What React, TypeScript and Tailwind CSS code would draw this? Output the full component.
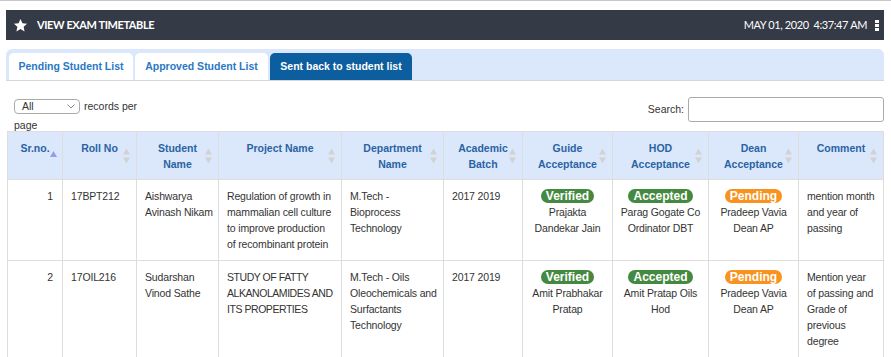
import React from "react";

const cols = [55, 74, 82, 123, 102, 79, 90, 96, 90, 85];

const headers: { label: React.ReactNode; active?: boolean }[] = [
  { label: "Sr.no.", active: true },
  { label: "Roll No" },
  { label: <>Student<br />Name</> },
  { label: "Project Name" },
  { label: <>Department<br />Name</> },
  { label: <>Academic<br />Batch</> },
  { label: <>Guide<br />Acceptance</> },
  { label: <>HOD<br />Acceptance</> },
  { label: <>Dean<br />Acceptance</> },
  { label: "Comment" },
];

type Row = {
  sr: string;
  roll: string;
  name: string[];
  project: string[];
  projectTight?: boolean;
  dept: string[];
  batch: string;
  guide: string[];
  hod: string[];
  dean: string[];
  comment: string[];
};

const rows: Row[] = [
  {
    sr: "1",
    roll: "17BPT212",
    name: ["Aishwarya", "Avinash Nikam"],
    project: ["Regulation of growth in", "mammalian cell culture", "to improve production", "of recombinant protein"],
    dept: ["M.Tech -", "Bioprocess", "Technology"],
    batch: "2017 2019",
    guide: ["Prajakta", "Dandekar Jain"],
    hod: ["Parag Gogate Co", "Ordinator DBT"],
    dean: ["Pradeep Vavia", "Dean AP"],
    comment: ["mention month", "and year of", "passing"],
  },
  {
    sr: "2",
    roll: "17OIL216",
    name: ["Sudarshan", "Vinod Sathe"],
    project: ["STUDY OF FATTY", "ALKANOLAMIDES AND", "ITS PROPERTIES"],
    projectTight: true,
    dept: ["M.Tech - Oils", "Oleochemicals and", "Surfactants", "Technology"],
    batch: "2017 2019",
    guide: ["Amit Prabhakar", "Pratap"],
    hod: ["Amit Pratap Oils", "Hod"],
    dean: ["Pradeep Vavia", "Dean AP"],
    comment: ["Mention year", "of passing and", "Grade of", "previous", "degree"],
  },
];

function Lines({ lines, tight }: { lines: string[]; tight?: boolean }) {
  return (
    <>
      {lines.map((l, i) => (
        <div key={i} className={tight ? "whitespace-nowrap tracking-[-0.45px]" : "whitespace-nowrap"}>
          {l}
        </div>
      ))}
    </>
  );
}

function SortIcon() {
  return (
    <svg className="absolute right-[6px] top-1/2 -translate-y-1/2" width="7" height="15" viewBox="0 0 7 15">
      <path d="M3.5 0 L7 6 L0 6 Z" fill="#d2d2d2" />
      <path d="M3.5 15 L7 9 L0 9 Z" fill="#d2d2d2" />
    </svg>
  );
}

function ActiveIcon() {
  return (
    <svg className="absolute right-[5px] top-[19px]" width="7" height="6" viewBox="0 0 7 6">
      <path d="M3.5 0 L7 6 L0 6 Z" fill="#9a9ae6" />
    </svg>
  );
}

function Badge({ kind }: { kind: "Verified" | "Accepted" | "Pending" }) {
  const bg = kind === "Pending" ? "bg-[#f7931e]" : "bg-[#44893f]";
  return (
    <div className="h-[16px] flex justify-center items-start">
      <span className={`inline-block ${bg} text-white font-bold text-[12px] leading-[14px] px-[5px] rounded-full mt-[1px] tracking-normal`}>
        {kind}
      </span>
    </div>
  );
}

const td = "border border-[#dddddd] align-top py-[8px]";

export default function App() {
  return (
    <div className="w-[891px] h-[357px] overflow-hidden bg-white border-t border-[#c8c8c8] font-['Liberation_Sans',Arial,sans-serif] text-[#333]">
      <div className="px-[6px] pt-[9px] w-[890px]">
        {/* dark header */}
        <div className="h-[30px] bg-[#343a46] flex items-center justify-between pl-[7px] pr-[5px] font-['Lato',sans-serif] text-white">
          <div className="flex items-center gap-[9px]">
            <svg width="15" height="15" viewBox="0 0 24 24">
              <path
                d="M12 1.5 L15.1 8.2 L22.5 9 L17 14 L18.5 21.4 L12 17.7 L5.5 21.4 L7 14 L1.5 9 L8.9 8.2 Z"
                fill="#ffffff"
              />
            </svg>
            <span className="text-[11px] font-bold tracking-[-0.4px]">VIEW EXAM TIMETABLE</span>
          </div>
          <div className="flex items-center gap-[8px]">
            <span className="text-[11px] tracking-[-0.4px] whitespace-pre">MAY 01, 2020  4:37:47 AM</span>
            <div className="flex flex-col gap-[1px]">
              <span className="block w-[4px] h-[3px] bg-white" />
              <span className="block w-[4px] h-[3px] bg-white" />
              <span className="block w-[4px] h-[3px] bg-white" />
            </div>
          </div>
        </div>

        {/* tabs */}
        <div className="mt-[9px] h-[32px] bg-[#dbe8fb] rounded-t-[6px] flex items-end pl-[3px] gap-[2px] border-b border-[#d6d6d6] text-[10.5px] font-bold">
          <div className="h-[27px] w-[124px] bg-white rounded-t-[5px] flex items-center justify-center text-[#2a78c2]">
            Pending Student List
          </div>
          <div className="h-[27px] w-[133px] bg-white rounded-t-[5px] flex items-center justify-center text-[#2a78c2]">
            Approved Student List
          </div>
          <div className="h-[27px] w-[142px] bg-[#0c5e9e] rounded-t-[5px] flex items-center justify-center text-white">
            Sent back to student list
          </div>
        </div>
      </div>

      {/* controls */}
      <div className="flex justify-between h-[50px] pl-[14px] pr-[7px] text-[10.5px]">
        <div className="pt-[17px]">
          <div className="flex items-center gap-[4px] h-[17px]">
            <div className="w-[66px] h-[15px] border border-[#aaaaaa] rounded-[4px] flex items-center justify-between pl-[7px] pr-[4px] text-[#333]">
              <span>All</span>
              <svg width="8" height="5" viewBox="0 0 8 5">
                <path d="M0.5 0.5 L4 4 L7.5 0.5" stroke="#888" fill="none" strokeWidth="1" />
              </svg>
            </div>
            <span>records per</span>
          </div>
          <div className="leading-[18px] mt-[1px]">page</div>
        </div>
        <div className="pt-[16px] flex items-center gap-[4px] h-[41px]">
          <span>Search:</span>
          <div className="w-[196px] h-[25px] border border-[#aaaaaa] rounded-[3px] bg-white" />
        </div>
      </div>

      {/* table */}
      <div className="pl-[7px]">
        <table className="table-fixed border-collapse w-[876px] text-[10.5px] leading-[16px]">
          <colgroup>
            {cols.map((w, i) => (
              <col key={i} style={{ width: w }} />
            ))}
          </colgroup>
          <thead>
            <tr className="bg-[#dbe8fb] h-[47px]">
              {headers.map((h, i) => (
                <th
                  key={i}
                  className="relative border border-[#dddddd] align-top pt-[8px] pb-[7px] px-[4px] text-center font-bold text-[#2a63a3]"
                >
                  {h.label}
                  {h.active ? <ActiveIcon /> : <SortIcon />}
                </th>
              ))}
            </tr>
          </thead>
          <tbody className="tracking-[-0.15px]">
            {rows.map((r, i) => (
              <tr key={i}>
                <td className={`${td} pr-[9px] text-right`}>{r.sr}</td>
                <td className={`${td} px-[8px]`}>{r.roll}</td>
                <td className={`${td} px-[8px]`}>
                  <Lines lines={r.name} />
                </td>
                <td className={`${td} px-[8px]`}>
                  <Lines lines={r.project} tight={r.projectTight} />
                </td>
                <td className={`${td} px-[8px]`}>
                  <Lines lines={r.dept} />
                </td>
                <td className={`${td} px-[8px]`}>{r.batch}</td>
                <td className={`${td} px-[2px] text-center`}>
                  <Badge kind="Verified" />
                  <Lines lines={r.guide} />
                </td>
                <td className={`${td} px-[2px] text-center`}>
                  <Badge kind="Accepted" />
                  <Lines lines={r.hod} />
                </td>
                <td className={`${td} px-[2px] text-center`}>
                  <Badge kind="Pending" />
                  <Lines lines={r.dean} />
                </td>
                <td className={`${td} px-[8px]`}>
                  <Lines lines={r.comment} />
                </td>
              </tr>
            ))}
            <tr className="h-[40px]">
              {cols.map((_, i) => (
                <td key={i} className="border border-[#dddddd]" />
              ))}
            </tr>
          </tbody>
        </table>
      </div>
    </div>
  );
}
